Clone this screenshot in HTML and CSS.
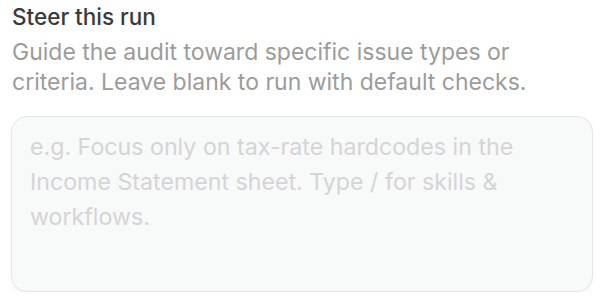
FILE: index.html
```html
<!DOCTYPE html>
<html lang="en">
<head>
    <meta charset="UTF-8">
    <meta name="viewport" content="width=device-width, initial-scale=1.0">
    <title>Steer this run</title>
    <link rel="stylesheet" href="styles.css">
</head>
<body>
    <div class="field">
        <label for="steer" class="field-title">Steer this run</label>
        <p class="field-hint">Guide the audit toward specific issue types or criteria. Leave blank to run with default checks.</p>
        <textarea id="steer" class="field-input" placeholder="e.g. Focus only on tax-rate hardcodes in the Income Statement sheet. Type / for skills &amp; workflows."></textarea>
    </div>
</body>
</html>
```

FILE: styles.css
```css
body {
    margin: 0;
    background-color: #ffffff;
    font-family: Inter, "Noto Sans", sans-serif;
}
.field {
    display: flex;
    flex-direction: column;
    width: 582px;
    padding: 2px 0 0 12px;
}
.field-title {
    font-size: 22.5px;
    font-weight: 500;
    color: #3a3a3a;
    line-height: 30px;
}
.field-hint {
    margin: 5px 0 0;
    width: 545px;
    font-size: 23px;
    line-height: 30px;
    color: #9c9c9c;
}
.field-input {
    box-sizing: border-box;
    margin: 19px 0 0 -1px;
    width: 582px;
    height: 176px;
    padding: 13px 60px 14px 18px;
    border: 1.5px solid #e6e7e8;
    border-radius: 16px;
    background-color: #f8f9f9;
    box-shadow: 0 2px 4px rgba(0, 0, 0, 0.04);
    font-family: inherit;
    font-size: 23.2px;
    line-height: 35px;
    resize: none;
    outline: none;
}
.field-input::placeholder {
    color: #d4d5d6;
}
```
